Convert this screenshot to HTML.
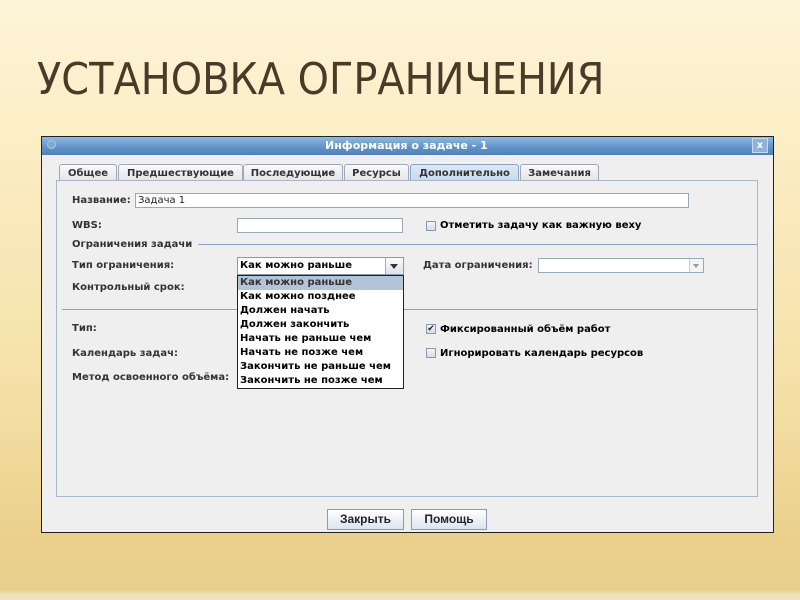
<!DOCTYPE html>
<html><head><meta charset="utf-8"><style>
*{margin:0;padding:0;box-sizing:border-box}
body{width:800px;height:600px;overflow:hidden;position:relative;font-family:"DejaVu Sans","Liberation Sans",sans-serif;
background:linear-gradient(180deg,#fdf4d8 0px,#fcefc8 120px,#f5e1a8 380px,#ead08c 540px,#e8cf8c 590px,#efe1b8 594px,#efe3bf 600px);}
.a{position:absolute;white-space:nowrap}
.t{font-size:44px;color:#4b3a28;font-family:"Liberation Sans Narrow","DejaVu Sans Condensed","Liberation Sans",sans-serif;left:37px;top:54px;transform:scaleX(1.007);transform-origin:left}
.win{left:41px;top:136px;width:733px;height:397px;background:#efefef;border:1px solid #222;}
.tb{left:42px;top:137px;width:731px;height:18px;background:linear-gradient(#8fb8e0,#5f92c8 60%,#4f82ba);}
.l{font-size:10px;font-weight:bold;color:#333}
.d{font-size:10px;font-weight:bold;color:#000}
.f{background:#fff;border:1px solid #9aa8b8}
.tab{top:164px;height:17px;border:1px solid #a0a8b8;border-bottom:none;background:linear-gradient(#fafafa,#e4e4e4);font-size:10px;font-weight:bold;color:#333;text-align:center;line-height:17px;border-radius:3px 3px 0 0}
.cb{width:10px;height:10px;border:1px solid #8a98aa;background:linear-gradient(#f4f6f9,#d4dce6)}
.btn{top:509px;height:21px;border:1px solid #8a9ab0;background:linear-gradient(#ffffff,#dbe4ee);font-family:"Liberation Sans Narrow","Liberation Sans",sans-serif;font-weight:bold;font-size:12px;color:#223;text-align:center;line-height:19px}
.it{left:238px;width:165px;height:14px;font-size:10px;font-weight:bold;padding-left:2px;line-height:14px}
</style></head><body>
<div class="a t">УСТАНОВКА ОГРАНИЧЕНИЯ</div>
<div class="a win"></div>
<div class="a tb"></div>
<div class="a" style="left:47px;top:140px;width:9px;height:9px;border-radius:50%;background:#7fa8d2;border:1px solid #a8c8e8"></div>
<div class="a" style="left:325px;top:139px;font-size:11px;font-weight:bold;color:#fff">Информация о задаче - 1</div>
<div class="a" style="left:752px;top:138px;width:16px;height:15px;background:#8eb2d8;border:1px solid #c8dcef;color:#fff;font-size:10px;font-weight:bold;text-align:center;line-height:13px">x</div>

<div class="a tab" style="left:59px;width:58px">Общее</div>
<div class="a tab" style="left:118px;width:125px">Предшествующие</div>
<div class="a tab" style="left:243px;width:100px">Последующие</div>
<div class="a tab" style="left:344px;width:65px">Ресурсы</div>
<div class="a tab" style="left:410px;width:109px;background:linear-gradient(#dce8f4,#c8daee);border-color:#8aa4c4">Дополнительно</div>
<div class="a tab" style="left:520px;width:79px">Замечания</div>
<div class="a" style="left:56px;top:180px;width:702px;height:317px;border:1px solid #a8b6cc;"></div>

<div class="a l" style="left:72px;top:195px">Название:</div>
<div class="a f" style="left:135px;top:193px;width:554px;height:15px;font-size:10px;padding-left:2px;line-height:13px;color:#222">Задача 1</div>
<div class="a l" style="left:72px;top:220px">WBS:</div>
<div class="a f" style="left:237px;top:218px;width:166px;height:15px"></div>
<div class="a cb" style="left:426px;top:221px"></div>
<div class="a d" style="left:440px;top:220px">Отметить задачу как важную веху</div>
<div class="a l" style="left:72px;top:239px">Ограничения задачи</div>
<div class="a" style="left:198px;top:244px;width:559px;height:1px;background:#8aa0bc"></div>
<div class="a l" style="left:72px;top:260px">Тип ограничения:</div>
<div class="a" style="left:237px;top:257px;width:167px;height:18px;border:1px solid #8a98aa;background:#fff"></div>
<div class="a d" style="left:240px;top:260px">Как можно раньше</div>
<div class="a" style="left:385px;top:258px;width:18px;height:16px;background:linear-gradient(#fafafa,#dde3ea);border-left:1px solid #aab"></div>
<div class="a" style="left:390px;top:264px;border-left:4px solid transparent;border-right:4px solid transparent;border-top:5px solid #333"></div>
<div class="a l" style="left:423px;top:260px">Дата ограничения:</div>
<div class="a f" style="left:538px;top:258px;width:166px;height:15px"></div>
<div class="a" style="left:689px;top:259px;width:14px;height:13px;border-left:1px solid #ccc;background:#f4f4f4"></div>
<div class="a" style="left:693px;top:264px;border-left:3px solid transparent;border-right:3px solid transparent;border-top:4px solid #999"></div>
<div class="a l" style="left:72px;top:282px">Контрольный срок:</div>
<div class="a" style="left:62px;top:309px;width:695px;height:1px;background:#8aa0bc"></div>
<div class="a l" style="left:72px;top:323px">Тип:</div>
<div class="a l" style="left:72px;top:348px">Календарь задач:</div>
<div class="a l" style="left:72px;top:372px">Метод освоенного объёма:</div>
<div class="a cb" style="left:426px;top:324px;font-size:9px;line-height:8px;text-align:center;color:#223">✔</div>
<div class="a d" style="left:440px;top:324px">Фиксированный объём работ</div>
<div class="a cb" style="left:426px;top:348px"></div>
<div class="a d" style="left:440px;top:348px">Игнорировать календарь ресурсов</div>

<div class="a" style="left:237px;top:275px;width:167px;height:114px;border:1px solid #222;background:#fff"></div>
<div class="a it" style="top:276px;background:#b4c4d8;color:#333">Как можно раньше</div>
<div class="a it" style="top:290px">Как можно позднее</div>
<div class="a it" style="top:304px">Должен начать</div>
<div class="a it" style="top:318px">Должен закончить</div>
<div class="a it" style="top:332px">Начать не раньше чем</div>
<div class="a it" style="top:346px">Начать не позже чем</div>
<div class="a it" style="top:360px">Закончить не раньше чем</div>
<div class="a it" style="top:374px">Закончить не позже чем</div>

<div class="a btn" style="left:327px;width:77px">Закрыть</div>
<div class="a btn" style="left:411px;width:76px">Помощь</div>
</body></html>
